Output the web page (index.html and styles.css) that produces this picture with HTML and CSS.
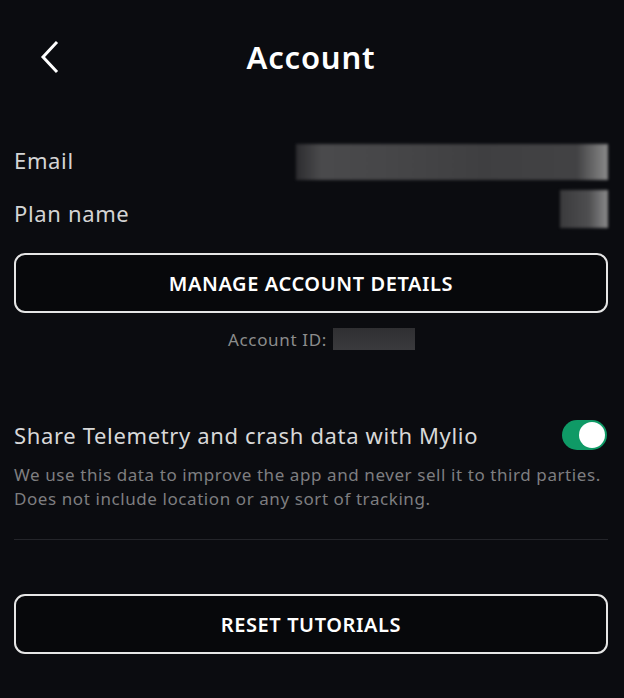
FILE: index.html
```html
<!DOCTYPE html>
<html lang="en">
<head>
<meta charset="utf-8">
<title>Account</title>
<link rel="stylesheet" href="styles.css">
</head>
<body>
<div class="page">
  <header class="header">
    <button class="back" aria-label="Back">
      <svg width="20" height="34" viewBox="0 0 20 34"><path d="M16 3 L3 17 L16 31" fill="none" stroke="#ffffff" stroke-width="3" stroke-linecap="square" stroke-linejoin="miter"/></svg>
    </button>
    <h1 class="title">Account</h1>
  </header>

  <section class="info">
    <div class="row row-email">
      <span class="label">Email</span>
      <span class="redact redact-email"></span>
    </div>
    <div class="row row-plan">
      <span class="label">Plan name</span>
      <span class="redact redact-plan"></span>
    </div>
  </section>

  <button class="outline-btn manage">MANAGE ACCOUNT DETAILS</button>

  <div class="account-id">
    <span>Account ID:</span>
    <span class="redact redact-id"></span>
  </div>

  <section class="telemetry">
    <div class="tel-row">
      <span class="tel-label">Share Telemetry and crash data with Mylio</span>
      <span class="toggle"><span class="knob"></span></span>
    </div>
    <p class="tel-desc">We use this data to improve the app and never sell it to third parties. Does not include location or any sort of tracking.</p>
  </section>

  <hr class="divider">

  <button class="outline-btn reset">RESET TUTORIALS</button>
</div>
</body>
</html>
```

FILE: styles.css
```css
html, body {
  margin: 0;
  padding: 0;
  background: #0b0c10;
}
body {
  font-family: "Noto Sans", "Open Sans", sans-serif;
  color: #dcdcdc;
  letter-spacing: 0.65px;
  width: 624px;
  height: 698px;
  overflow: hidden;
}
.page {
  padding: 0 16px 0 14px;
  display: flex;
  flex-direction: column;
}
.header {
  height: 114px;
  display: flex;
  align-items: center;
  justify-content: center;
  position: relative;
}
.back {
  position: absolute;
  left: 26px;
  top: 40px;
  background: none;
  border: 0;
  padding: 0;
  width: 20px;
  height: 34px;
  cursor: pointer;
}
.back svg { display: block; }
.title {
  margin: 0;
  font-size: 31px;
  font-weight: 600;
  color: #ffffff;
  line-height: 40px;
  letter-spacing: 0.8px;
}
.info {
  margin-top: 26px;
  display: flex;
  flex-direction: column;
  gap: 13px;
}
.row {
  height: 40px;
  display: flex;
  justify-content: space-between;
  align-items: flex-start;
}
.label {
  font-size: 22px;
  line-height: 40px;
  color: #d4d4d4;
}
.redact {
  display: block;
  filter: blur(1.5px);
}
.redact-email {
  width: 312px;
  height: 36px;
  margin-top: 4px;
  background: linear-gradient(90deg, #2c2c2f 0%, #4a4a4c 8%, #464648 30%, #3f3f41 60%, #424244 90%, #8a8a8a 100%);
}
.redact-plan {
  width: 48px;
  height: 38px;
  margin-top: -3px;
  background: linear-gradient(90deg, #3a3a3c 0%, #4e4e50 60%, #8a8a8a 100%);
}
.outline-btn {
  display: block;
  width: 100%;
  height: 60px;
  flex: 0 0 60px;
  background: #07080b;
  border: 2px solid #e6e6e6;
  border-radius: 11px;
  color: #ffffff;
  font-family: "Noto Sans", "Open Sans", sans-serif;
  font-size: 20px;
  font-weight: 600;
  letter-spacing: 0.6px;
  cursor: pointer;
  padding: 0;
}
.manage {
  margin-top: 20px;
}
.account-id {
  margin-top: 15px;
  height: 22px;
  display: flex;
  justify-content: center;
  align-items: center;
  gap: 6px;
  padding-left: 21px;
  font-size: 17px;
  color: #8c8c8c;
}
.redact-id {
  width: 82px;
  height: 22px;
  filter: none;
  background: linear-gradient(180deg, #2f2f32, #3a3a3d);
}
.telemetry {
  margin-top: 69px;
}
.tel-row {
  height: 32px;
  display: flex;
  justify-content: space-between;
  align-items: center;
}
.tel-label {
  font-size: 22px;
  color: #d8d8d8;
}
.toggle {
  width: 45px;
  height: 30px;
  border-radius: 15px;
  background: #0f9a66;
  margin-right: 1px;
  position: relative;
  display: block;
}
.knob {
  position: absolute;
  right: 2px;
  top: 2px;
  width: 26px;
  height: 26px;
  border-radius: 50%;
  background: #ffffff;
}
.tel-desc {
  margin: 12px 0 0;
  font-size: 17px;
  line-height: 24px;
  letter-spacing: 0.58px;
  color: #7e7e80;
}
.divider {
  margin: 28px 0 0;
  border: 0;
  height: 1px;
  flex: 0 0 1px;
  background: #24252a;
}
.reset {
  margin-top: 54px;
}
```
